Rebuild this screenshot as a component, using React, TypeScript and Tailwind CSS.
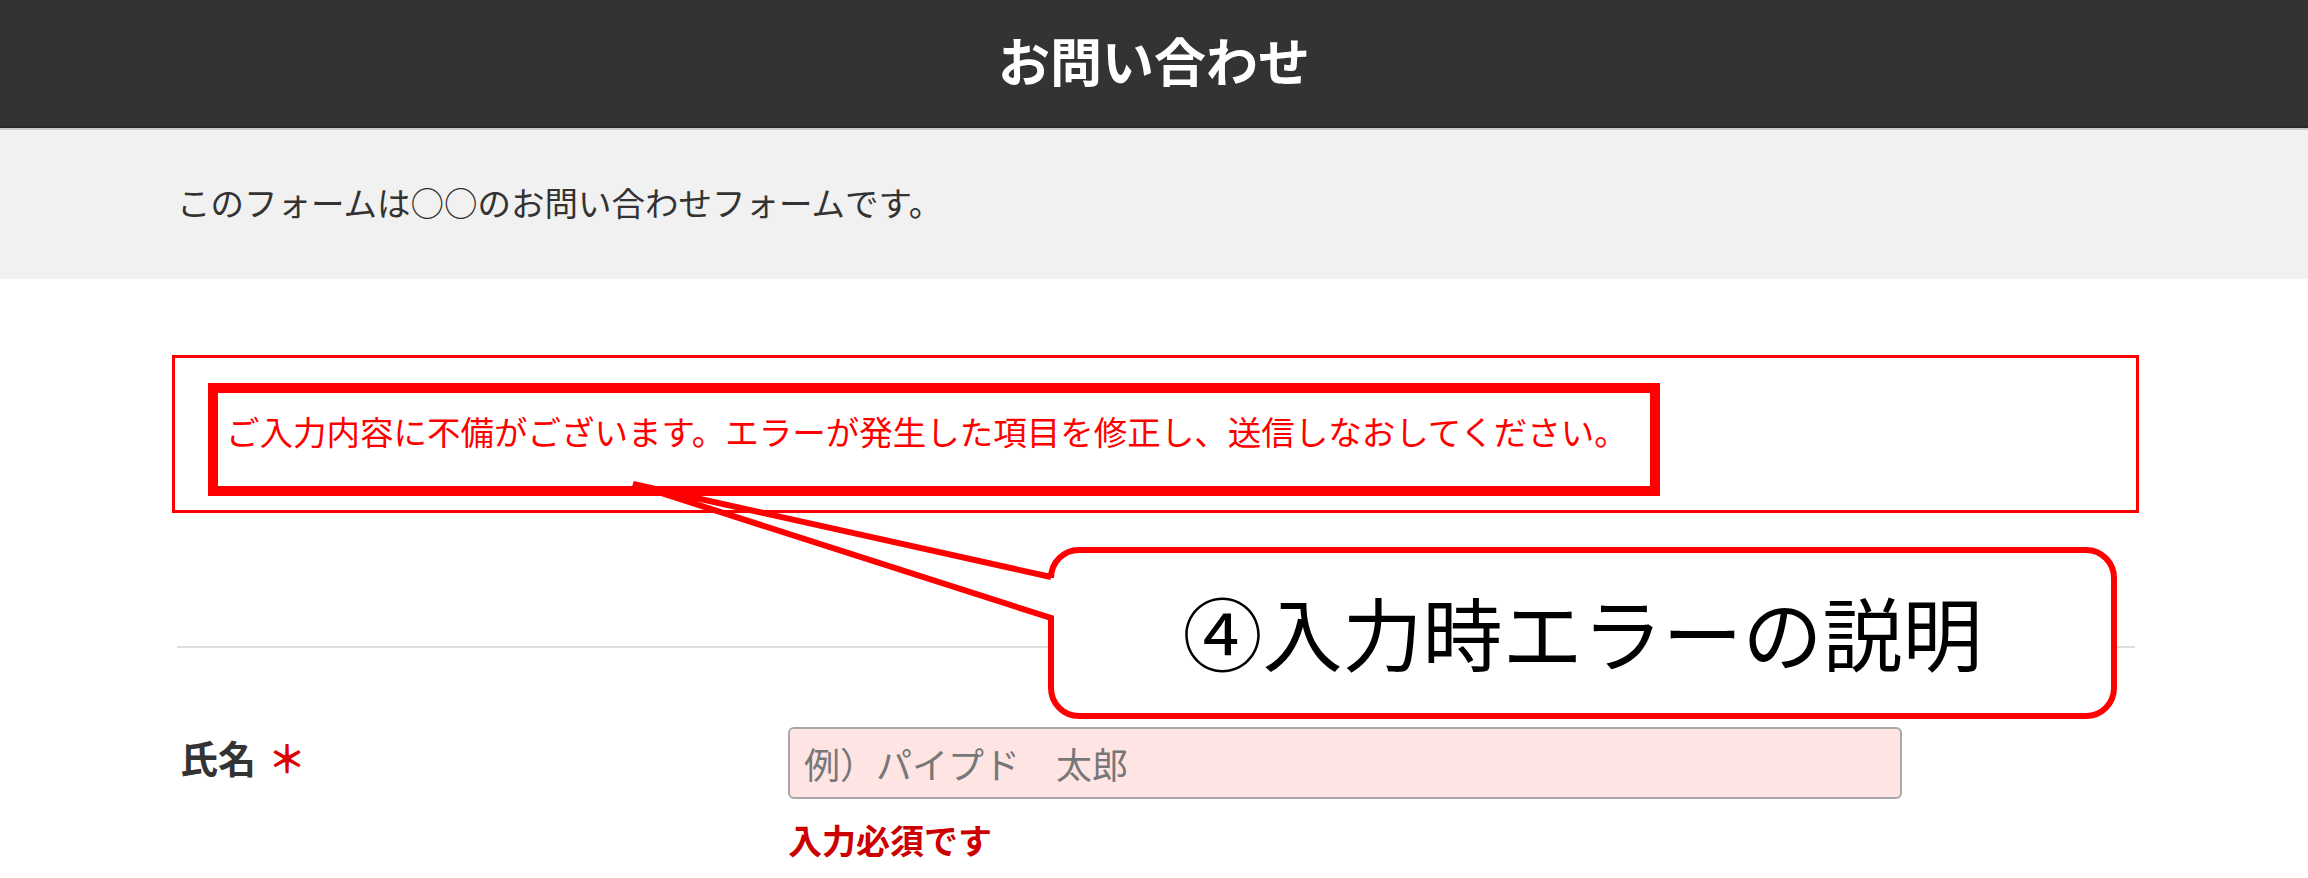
const jp = "font-['Noto_Sans_CJK_JP','Noto_Sans',sans-serif]";

const Callout = () => {
  return (
    <div className="pointer-events-none absolute inset-0">
      <svg className="absolute left-0 top-0" width="2308" height="878" viewBox="0 0 2308 878">
        {/* box round the message */}
        <rect x="213" y="388" width="1442" height="103" fill="none" stroke="#ff0000" strokeWidth="10" />
        {/* speech bubble */}
        <rect x="1051" y="550" width="1063" height="166" rx="28" fill="#ffffff" />
        <path
          d="M1051 577 L633 484 L1051 618 L1051 688 A28 28 0 0 0 1079 716 L2086 716 A28 28 0 0 0 2114 688 L2114 578 A28 28 0 0 0 2086 550 L1079 550 A28 28 0 0 0 1051 578"
          fill="none"
          stroke="#ff0000"
          strokeWidth="6"
          strokeLinejoin="miter"
        />
      </svg>
      <div className="absolute left-[1048px] top-[547px] flex h-[172px] w-[1069px] items-center justify-center pb-[6px] text-[80px] leading-none text-black">
        ④入力時エラーの説明
      </div>
    </div>
  );
};

export default function App() {
  return (
    <div className={`relative h-[878px] w-[2308px] overflow-hidden bg-white text-[#333] ${jp}`}>
      <header className="flex h-[128px] items-center justify-center border-b-2 border-[#282828] bg-[#333333] pb-[6px]">
        <h1 className="text-[52px] font-bold leading-none text-white">お問い合わせ</h1>
      </header>

      <section className="flex h-[151px] items-center border-t-2 border-[#cacaca] bg-[#f1f1f1] pb-[6px] pl-[177px]">
        <p className="text-[33.5px] leading-none text-[#333]">このフォームは○○のお問い合わせフォームです。</p>
      </section>

      <div className="ml-[172px] mt-[76px] flex h-[158px] w-[1967px] items-center border-[3px] border-[#ff0000] pb-[6px] pl-[51px]">
        <p className="text-[33.5px] leading-none text-[#ff0000]">
          ご入力内容に不備がございます。エラーが発生した項目を修正し、送信しなおしてください。
        </p>
      </div>

      <div className="ml-[177px] mt-[133px] h-[2px] w-[1958px] bg-[#dedede]" />

      <div className="ml-[177px] mt-[79px] flex items-start">
        <div className="flex h-[60px] w-[611px] items-center gap-[12px] pl-[3px]">
          <span className="text-[38px] font-bold leading-none text-[#333]">氏名</span>
          <span className="text-[38px] font-bold leading-none text-[#dd0000]">＊</span>
        </div>
        <div className="flex flex-col">
          <input
            type="text"
            placeholder="例）パイプド　太郎"
            className="h-[72px] w-[1114px] rounded-[6px] border-2 border-[#a8a8a8] bg-[#ffe4e4] px-[14px] text-[36px] text-[#333] outline-none placeholder:text-[#777]"
          />
          <p className="mt-[24px] text-[34px] font-bold leading-none text-[#cc0000]">入力必須です</p>
        </div>
      </div>

      <Callout />
    </div>
  );
}
